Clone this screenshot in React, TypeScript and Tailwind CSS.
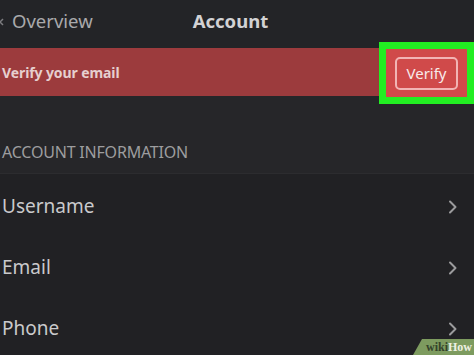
import React from "react";

const ROWS = ["Username", "Email", "Phone"];

function Chevron() {
  return (
    <svg width="10" height="14" viewBox="0 0 10 14" fill="none" className="shrink-0">
      <path d="M2 1.5 L7.5 7 L2 12.5" stroke="#9b9b9d" strokeWidth="2" strokeLinecap="round" strokeLinejoin="round" />
    </svg>
  );
}

export default function App() {
  return (
    <div
      className="relative w-[474px] h-[355px] overflow-hidden bg-[#212124]"
      style={{ fontFamily: '"Noto Sans", "Open Sans", sans-serif' }}
    >
      {/* top bar */}
      <header className="h-[48px] bg-[#232427] flex items-center pb-[6px] relative">
        {/* tail of the back arrow, cut by the edge */}
        <svg width="4" height="8" viewBox="0 0 4 8" className="absolute left-0 top-[18px]">
          <path d="M3 1 L0 4 L3 7" stroke="#7d7d80" strokeWidth="1.5" fill="none" />
        </svg>
        <span className="ml-[12px] text-[18.5px] text-[#a9a9ab] leading-none">Overview</span>
        <span className="ml-[100px] text-[18.5px] font-bold text-[#d2d2d4] leading-none">Account</span>
      </header>

      {/* verify banner */}
      <div className="h-[48px] bg-[#9c3b3d] flex items-center pl-[2px]">
        <span className="text-[14px] font-bold text-[#e6cfcf] tracking-[-0.1px]">Verify your email</span>
      </div>

      {/* section header */}
      <div className="h-[78px] bg-[#262629] flex items-end pb-[9px] pl-[2px] border-b border-[#2c2c2f]">
        <span className="text-[16px] text-[#9d9d9f] tracking-[-0.2px]">ACCOUNT INFORMATION</span>
      </div>

      {/* rows */}
      <div className="flex flex-col pt-[2px]">
        {ROWS.map((r) => (
          <div key={r} className="h-[61px] flex items-center justify-between pl-[2px] pr-[16px]">
            <span className="text-[19px] text-[#cacacc]">{r}</span>
            <Chevron />
          </div>
        ))}
      </div>

      {/* highlight box over verify button */}
      <div className="absolute left-[379px] top-[42px] w-[95px] h-[62px] border-[7px] border-[#22ee22] bg-[#d04a4a] flex items-center justify-center">
        <div className="w-[63px] h-[33px] rounded-[5px] border-2 border-[#f2b4b4] flex items-center justify-center text-[15px] text-[#f7eaea]">
          Verify
        </div>
      </div>

      {/* wikiHow badge */}
      <div className="absolute right-0 bottom-0 w-[61px] h-[16px] bg-[#7d9b5f] [clip-path:polygon(9px_0,100%_0,100%_100%,0_100%)] flex items-center justify-end pr-[2px]">
        <span
          className="text-[12px] font-bold leading-none"
          style={{ fontFamily: '"Liberation Serif", serif' }}
        >
          <span className="text-[#34432a]">wiki</span>
          <span className="text-[#eef0e2]">How</span>
        </span>
      </div>
    </div>
  );
}
